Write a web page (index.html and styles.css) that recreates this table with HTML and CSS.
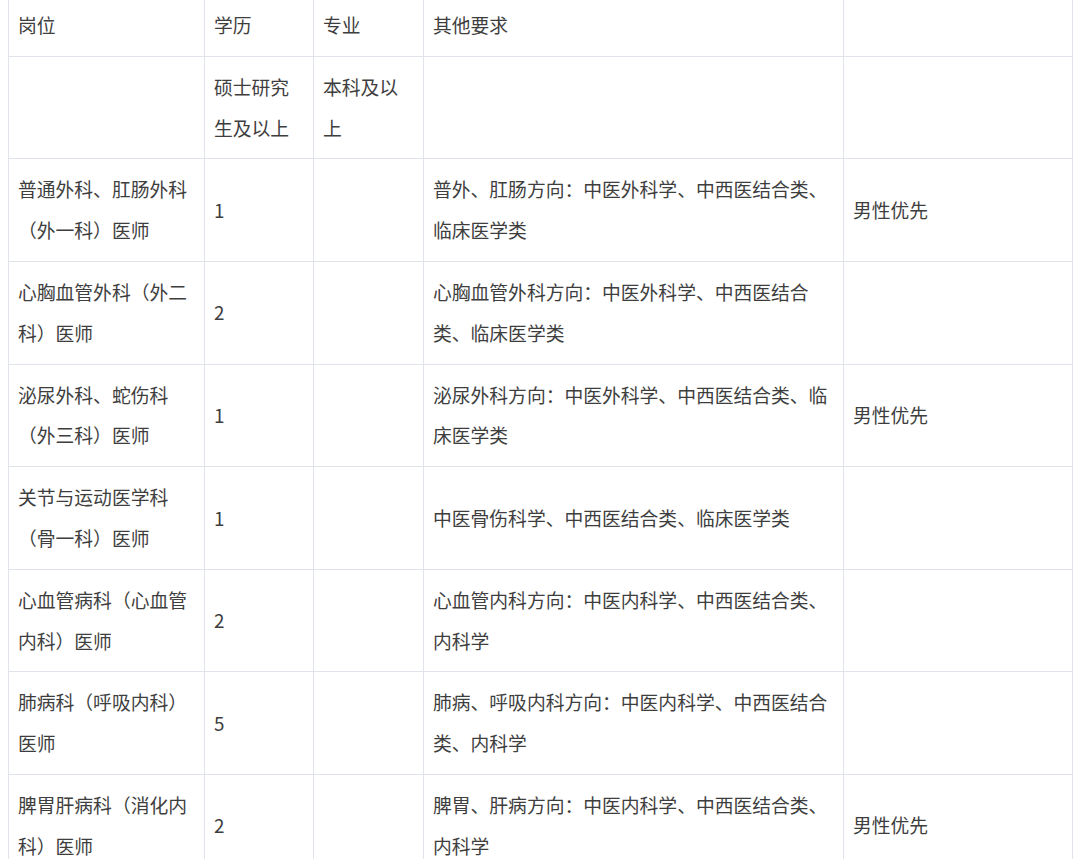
FILE: index.html
```html
<!DOCTYPE html>
<html lang="zh-CN">
<head>
<meta charset="utf-8">
<title>岗位表</title>
<link rel="stylesheet" href="styles.css">
</head>
<body>
<table class="jobs">
  <colgroup>
    <col class="c1"><col class="c2"><col class="c3"><col class="c4"><col class="c5">
  </colgroup>
  <tbody>
    <tr><td>岗位</td><td>学历</td><td>专业</td><td>其他要求</td><td></td></tr>
    <tr><td></td><td>硕士研究生及以上</td><td>本科及以上</td><td></td><td></td></tr>
    <tr><td>普通外科、肛肠外科（外一科）医师</td><td>1</td><td></td><td>普外、肛肠方向：中医外科学、中西医结合类、临床医学类</td><td>男性优先</td></tr>
    <tr><td>心胸血管外科（外二科）医师</td><td>2</td><td></td><td>心胸血管外科方向：中医外科学、中西医结合类、临床医学类</td><td></td></tr>
    <tr><td>泌尿外科、蛇伤科（外三科）医师</td><td>1</td><td></td><td>泌尿外科方向：中医外科学、中西医结合类、临床医学类</td><td>男性优先</td></tr>
    <tr><td>关节与运动医学科（骨一科）医师</td><td>1</td><td></td><td>中医骨伤科学、中西医结合类、临床医学类</td><td></td></tr>
    <tr><td>心血管病科（心血管内科）医师</td><td>2</td><td></td><td>心血管内科方向：中医内科学、中西医结合类、内科学</td><td></td></tr>
    <tr><td>肺病科（呼吸内科）医师</td><td>5</td><td></td><td>肺病、呼吸内科方向：中医内科学、中西医结合类、内科学</td><td></td></tr>
    <tr><td>脾胃肝病科（消化内科）医师</td><td>2</td><td></td><td>脾胃、肝病方向：中医内科学、中西医结合类、内科学</td><td>男性优先</td></tr>
  </tbody>
</table>
</body>
</html>
```
FILE: styles.css
```css
html, body {
  margin: 0;
  padding: 0;
  background: #ffffff;
}
body {
  padding: 0 8px;
  font-family: "Noto Sans CJK SC", "Noto Sans", sans-serif;
  color: #3e3e3e;
  overflow: hidden;
}
.jobs {
  margin-top: -6px;
  width: 1064px;
  border-collapse: collapse;
  table-layout: fixed;
}
.c1 { width: 196px; }
.c2 { width: 109px; }
.c3 { width: 110px; }
.c4 { width: 420px; }
.c5 { width: 229px; }
.jobs td {
  border: 1px solid #e0e3ea;
  padding: 10px 8px 10px 9px;
  font-size: 18.8px;
  line-height: 40.8px;
  vertical-align: middle;
  word-break: break-all;
}
```
